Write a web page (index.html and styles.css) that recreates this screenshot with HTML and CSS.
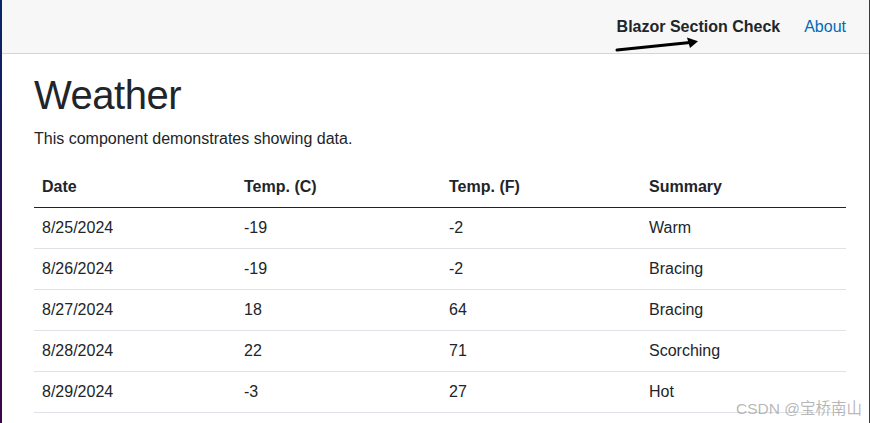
FILE: index.html
```html
<!DOCTYPE html>
<html lang="en">
<head>
<meta charset="utf-8">
<title>Weather</title>
<link rel="stylesheet" href="styles.css">
</head>
<body>
<div class="page">
  <div class="sidebar"></div>
  <main class="main">
    <div class="top-row">
      <span class="section-check">Blazor Section Check</span>
      <a class="about" href="#">About</a>
    </div>
    <article class="content">
      <h1 class="title">Weather</h1>
      <p class="lead-text">This component demonstrates showing data.</p>
      <table class="table">
        <thead>
          <tr><th class="col-date">Date</th><th class="col-c">Temp. (C)</th><th class="col-f">Temp. (F)</th><th>Summary</th></tr>
        </thead>
        <tbody>
          <tr><td>8/25/2024</td><td>-19</td><td>-2</td><td>Warm</td></tr>
          <tr><td>8/26/2024</td><td>-19</td><td>-2</td><td>Bracing</td></tr>
          <tr><td>8/27/2024</td><td>18</td><td>64</td><td>Bracing</td></tr>
          <tr><td>8/28/2024</td><td>22</td><td>71</td><td>Scorching</td></tr>
          <tr><td>8/29/2024</td><td>-3</td><td>27</td><td>Hot</td></tr>
        </tbody>
      </table>
    </article>
  </main>
  <div class="edge"></div>
</div>
<svg class="annot-arrow" width="90" height="22" viewBox="0 0 90 22">
  <line x1="5" y1="16" x2="78" y2="8.5" stroke="#000" stroke-width="3" stroke-linecap="round"/>
  <polygon points="86,7.3 75,3.5 78,14" fill="#000"/>
</svg>
<div class="watermark">CSDN @宝桥南山</div>
</body>
</html>
```

FILE: styles.css
```css
html, body {
  margin: 0;
  padding: 0;
  height: 100%;
}
body {
  font-family: "Liberation Sans", Arial, sans-serif;
  font-size: 16px;
  line-height: 1.5;
  color: #212529;
  background: #fff;
  overflow: hidden;
  position: relative;
}
.page {
  display: flex;
  flex-direction: row;
  min-height: 100%;
}
.sidebar {
  width: 2px;
  flex: none;
  background-image: linear-gradient(180deg, rgb(5, 39, 103) 0%, #3a0647 70%);
}
.edge {
  width: 1px;
  flex: none;
  background: #3a3a3a;
}
.main {
  flex: 1;
  min-width: 0;
}
.top-row {
  height: 53px;
  background: #f7f7f7;
  border-bottom: 1px solid #d6d5d5;
  display: flex;
  align-items: center;
  justify-content: flex-end;
  padding-right: 23px;
}
.section-check {
  font-weight: bold;
  color: #212529;
}
.about {
  margin-left: 24px;
  color: #006bb7;
  text-decoration: none;
}
.content {
  padding: 16.6px 23px 0 32px;
}
.title {
  font-size: 40px;
  font-weight: 500;
  line-height: 1.2;
  letter-spacing: -0.5px;
  margin: 0 0 8px 0;
}
.lead-text {
  margin: 0 0 16px 0;
}
.table {
  width: 100%;
  border-collapse: collapse;
  table-layout: fixed;
}
.table th,
.table td {
  box-sizing: border-box;
  text-align: left;
  padding: 8px;
  border-bottom: 1px solid #dee2e6;
}
.table th {
  font-weight: bold;
  border-bottom: 1px solid #212529;
}
.col-date { width: 24.88%; }
.col-c { width: 25.25%; }
.col-f { width: 24.63%; }
.annot-arrow {
  position: absolute;
  left: 612px;
  top: 34px;
}
.watermark {
  position: absolute;
  right: 8px;
  top: 398px;
  font-size: 15.5px;
  line-height: 22px;
  color: rgba(160, 160, 160, 0.75);
  font-family: "Liberation Sans", "Noto Sans CJK SC", sans-serif;
}
```
